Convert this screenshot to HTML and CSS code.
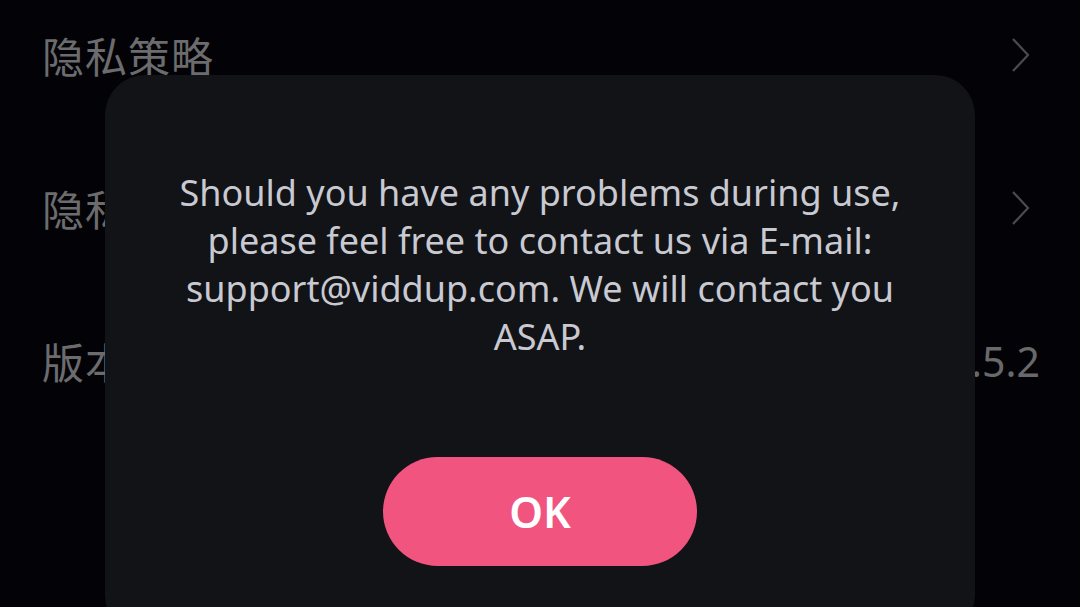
FILE: index.html
```html
<!DOCTYPE html>
<html lang="zh-CN">
<head>
    <meta charset="UTF-8">
    <meta name="viewport" content="width=device-width, initial-scale=1.0">
    <title>设置</title>
    <link rel="stylesheet" href="styles.css">
</head>
<body>
    <ul class="settings-list">
        <li class="settings-row">
            <span class="row-label">隐私策略</span>
            <svg class="chevron" width="20" height="36" viewBox="0 0 20 36"><path d="M3 2 L18 18 L3 34" /></svg>
        </li>
        <li class="settings-row">
            <span class="row-label">隐私设置</span>
            <svg class="chevron" width="20" height="36" viewBox="0 0 20 36"><path d="M3 2 L18 18 L3 34" /></svg>
        </li>
        <li class="settings-row version-row">
            <span class="row-label">版本号</span>
            <span class="row-value">V1.5.2</span>
        </li>
    </ul>

    <div class="dialog">
        <p class="dialog-text">Should you have any problems during use, please feel free to contact us via E-mail: support@viddup.com. We will contact you ASAP.</p>
        <button type="button" class="dialog-button">OK</button>
    </div>
</body>
</html>
```

FILE: styles.css
```css
body {
    margin: 0;
    background-color: #030307;
    font-family: "Noto Sans", "Noto Sans CJK SC", sans-serif;
    overflow: hidden;
    height: 607px;
}

.settings-list {
    list-style: none;
    margin: -22px 0 0;
    padding: 0;
}

.settings-row {
    display: flex;
    align-items: center;
    justify-content: space-between;
    height: 153px;
    padding: 0 50px 0 42px;
}

.row-label {
    font-family: "Noto Sans CJK SC", sans-serif;
    font-size: 42px;
    color: #6c6c6e;
    letter-spacing: 1px;
}

.chevron path {
    fill: none;
    stroke: #4b4b4d;
    stroke-width: 2.2;
}

.version-row {
    padding-right: 40px;
}

.row-value {
    font-size: 41px;
    color: #69696b;
}

.dialog {
    position: absolute;
    top: 75px;
    left: 105px;
    width: 870px;
    height: 560px;
    box-sizing: border-box;
    padding: 94px 40px 0;
    background-color: #111317;
    border-radius: 40px;
    display: flex;
    flex-direction: column;
    align-items: center;
}

.dialog-text {
    margin: 0;
    max-width: 750px;
    font-size: 36px;
    line-height: 48px;
    text-align: center;
    color: #c9c9d2;
}

.dialog-button {
    margin-top: 96px;
    width: 314px;
    height: 109px;
    border: none;
    border-radius: 55px;
    background-color: #f0547f;
    color: #ffffff;
    font-family: "Noto Sans", sans-serif;
    font-size: 43px;
    font-weight: 600;
    cursor: pointer;
}
```
